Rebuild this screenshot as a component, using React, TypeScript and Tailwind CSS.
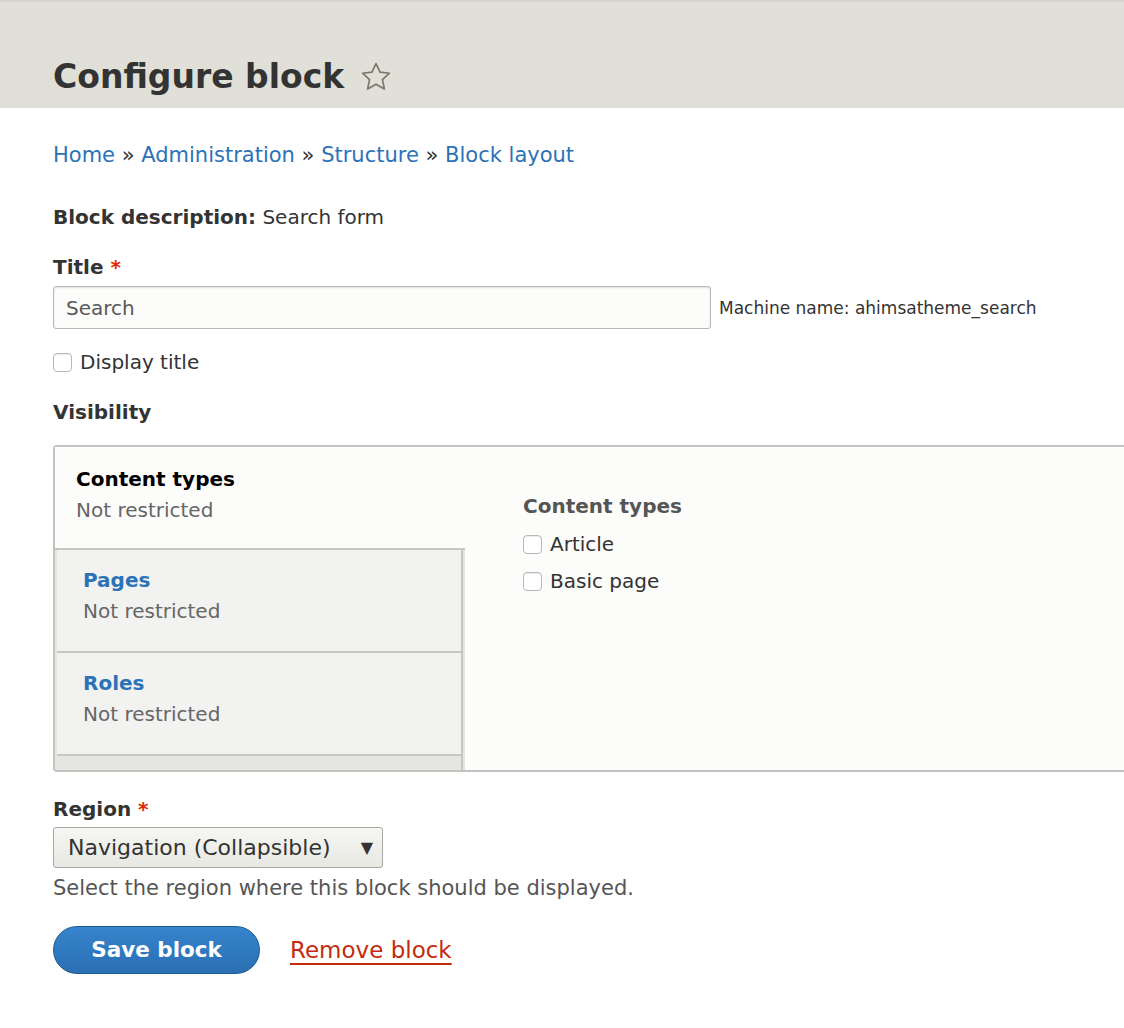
import * as React from "react";

const font = { fontFamily: '"DejaVu Sans", "Liberation Sans", sans-serif' };

function Checkbox() {
  return (
    <span className="inline-block size-[19px] shrink-0 rounded-[4px] border border-[#b8b8b8] bg-white shadow-[inset_0_1px_1px_rgba(0,0,0,0.08)]" />
  );
}

function Star() {
  return (
    <svg width="34" height="34" viewBox="0 0 24 24" fill="none" stroke="#7a7a6c" strokeWidth="1.2" strokeLinejoin="round">
      <path d="M12 2.5l2.85 6.1 6.65.75-4.95 4.55 1.35 6.6L12 17.2l-5.9 3.3 1.35-6.6L2.5 9.35l6.65-.75z" />
    </svg>
  );
}

type Tab = { title: string; active?: boolean };

const tabs: Tab[] = [
  { title: "Content types", active: true },
  { title: "Pages" },
  { title: "Roles" },
];

export default function App() {
  return (
    <div className="min-h-[1028px] w-[1124px] overflow-hidden bg-white text-[#333]" style={font}>
      <div className="border-t-2 border-[#d4d4cc] bg-[#e0e0d8] pt-[55px] pb-[11px] pl-[53px]">
        <div className="flex items-center gap-[15px]">
          <h1 className="text-[33px] leading-[40px] font-bold text-[#333]">Configure block</h1>
          <Star />
        </div>
      </div>

      <div className="px-[53px]">
        <nav className="mt-[33px] text-[21px] leading-[28px] text-[#2c72b7]">
          <a>Home</a> <span className="text-[#333]">»</span> <a>Administration</a>{" "}
          <span className="text-[#333]">»</span> <a>Structure</a> <span className="text-[#333]">»</span>{" "}
          <a>Block layout</a>
        </nav>

        <p className="mt-[34px] text-[20px] leading-[28px]">
          <span className="font-bold">Block description:</span> Search form
        </p>

        <div className="mt-[22px] text-[20px] leading-[28px] font-bold">
          Title <span className="text-[#e32700]">*</span>
        </div>
        <div className="mt-[5px] flex items-end gap-2">
          <div className="flex h-[43px] w-[658px] items-center rounded-[3px] border border-[#b8b8b8] bg-[#fcfcfa] px-3 text-[20px] text-[#595959] shadow-[inset_0_1px_2px_rgba(0,0,0,0.12)]">
            Search
          </div>
          <span className="pb-[8px] text-[17px] text-[#333]">Machine name: ahimsatheme_search</span>
        </div>

        <label className="mt-[19px] flex items-center gap-2 text-[20px] leading-[28px]">
          <Checkbox />
          Display title
        </label>

        <div className="mt-[22px] text-[20px] leading-[28px] font-bold">Visibility</div>

        <div className="mt-[19px] mr-[-80px] flex h-[327px] rounded-l-[4px] border-2 border-r-0 border-[#c2c2bf]">
          <div className="flex w-[410px] shrink-0 flex-col bg-[#e5e5e2]">
            {tabs.map((t) =>
              t.active ? (
                <div key={t.title} className="h-[103px] border-b-2 border-[#c6c6c3] bg-[#fcfcfa] pt-[17px] pl-[21px]">
                  <div className="text-[20px] leading-[31px] font-bold text-black">{t.title}</div>
                  <div className="text-[20px] leading-[31px] text-[#666]">Not restricted</div>
                </div>
              ) : (
                <div
                  key={t.title}
                  className="ml-[2px] mr-[2px] h-[103px] border-r-2 border-b-2 border-[#c6c6c3] bg-[#f2f2f0] pt-[15px] pl-[26px]"
                >
                  <div className="text-[20px] leading-[31px] font-bold text-[#2c72b7]">{t.title}</div>
                  <div className="text-[20px] leading-[31px] text-[#666]">Not restricted</div>
                </div>
              )
            )}
            <div className="ml-[2px] mr-[2px] flex-1 border-r-2 border-[#c6c6c3] bg-[#e5e5e2]" />
          </div>
          <div className="flex-1 bg-[#fcfcfa] pt-[45px] pl-[58px]">
            <div className="text-[20px] leading-[28px] font-bold text-[#555]">Content types</div>
            <label className="mt-[10px] flex items-center gap-2 text-[20px] leading-[28px]">
              <Checkbox />
              Article
            </label>
            <label className="mt-[9px] flex items-center gap-2 text-[20px] leading-[28px]">
              <Checkbox />
              Basic page
            </label>
          </div>
        </div>

        <div className="mt-[23px] text-[20px] leading-[28px] font-bold">
          Region <span className="text-[#e32700]">*</span>
        </div>
        <div className="mt-[4px] flex h-[41px] w-[330px] items-center justify-between rounded-[3px] border border-[#a6a6a6] bg-gradient-to-b from-[#f6f6f3] to-[#e8e8e3] pl-[14px] pr-[9px] text-[22px] text-[#333]">
          <span>Navigation (Collapsible)</span>
          <span className="text-[16px]">▼</span>
        </div>
        <p className="mt-[6px] text-[21px] leading-[28px] text-[#555]">Select the region where this block should be displayed.</p>

        <div className="mt-[24px] flex items-center gap-[30px]">
          <button className="h-[48px] w-[207px] rounded-full border border-[#1e5c90] bg-gradient-to-b from-[#3684cc] to-[#2a6fb3] text-[21.5px] font-bold text-white">
            Save block
          </button>
          <a className="text-[23px] text-[#c42b0e] underline underline-offset-[5px]">Remove block</a>
        </div>
      </div>
    </div>
  );
}
